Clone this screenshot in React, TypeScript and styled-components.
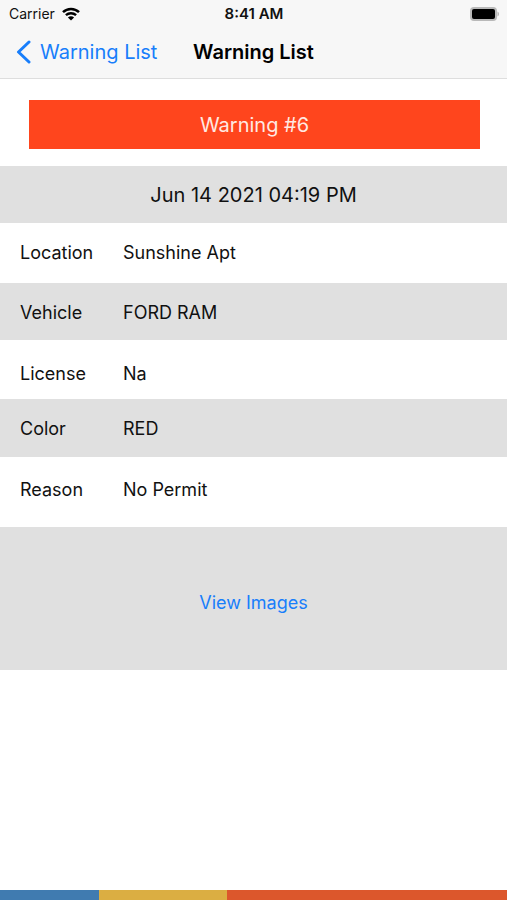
import React from 'react';
import styled, { createGlobalStyle } from 'styled-components';

const GlobalStyle = createGlobalStyle`
  *,
  *::before,
  *::after {
    box-sizing: border-box;
  }

  body {
    margin: 0;
    background: #ffffff;
    font-family: Inter, 'Liberation Sans', sans-serif;
    color: #111111;
  }
`;

const Screen = styled.div`
  min-height: 100vh;
  display: flex;
  flex-direction: column;
`;

const TopBar = styled.header`
  background: #f7f7f7;
  border-bottom: 1px solid #dedede;
`;

const StatusBar = styled.div`
  height: 28px;
  padding: 0 8px 0 9px;
  display: grid;
  grid-template-columns: 1fr auto 1fr;
  align-items: center;
  font-size: 14px;
  line-height: 20px;
`;

const Carrier = styled.div`
  display: flex;
  align-items: center;
  gap: 7px;
`;

const Clock = styled.time`
  font-size: 15px;
  font-weight: 600;
`;

const BatteryIcon = styled.svg`
  justify-self: end;
`;

const NavBar = styled.nav`
  height: 50px;
  padding: 0 16px 2px;
  display: grid;
  grid-template-columns: 1fr auto 1fr;
  align-items: center;
  font-size: 20px;
  line-height: 24px;
`;

const BackButton = styled.button`
  justify-self: start;
  display: flex;
  align-items: center;
  gap: 8px;
  padding: 0;
  border: none;
  background: none;
  color: #187efb;
  font: inherit;
  white-space: nowrap;
  cursor: pointer;
`;

const NavTitle = styled.h1`
  margin: 0;
  font-size: 20px;
  font-weight: 600;
  color: #000000;
  white-space: nowrap;
`;

const Banner = styled.h2`
  margin: 21px 27px 17px 29px;
  padding: 13px 12px 11px;
  background: #ff451d;
  color: #ffe9e2;
  font-size: 20px;
  font-weight: 400;
  line-height: 25px;
  text-align: center;
`;

const DateRow = styled.div`
  padding: 17px 16px 15px;
  background: #e0e0e0;
  font-size: 20px;
  line-height: 25px;
  text-align: center;
`;

const Details = styled.dl`
  margin: 0;
`;

const DetailRow = styled.div<{ $shaded: boolean; $top: number; $bottom: number }>`
  display: grid;
  grid-template-columns: 103px 1fr;
  padding: ${props => props.$top}px 20px ${props => props.$bottom}px;
  background: ${props => (props.$shaded ? '#e0e0e0' : '#ffffff')};
  font-size: 18px;
  line-height: 24px;
`;

const Label = styled.dt`
  margin: 0;
`;

const Value = styled.dd`
  margin: 0;
`;

const ImagesPanel = styled.div`
  display: flex;
  justify-content: center;
  padding: 64px 20px 55px;
  background: #e0e0e0;
`;

const ViewImagesButton = styled.button`
  padding: 0;
  border: none;
  background: none;
  color: #187efb;
  font: inherit;
  font-size: 18px;
  line-height: 24px;
  cursor: pointer;
`;

const Footer = styled.footer`
  height: 10px;
  margin-top: auto;
  display: flex;
`;

const Stripe = styled.span<{ $color: string; $share: number }>`
  flex: ${props => props.$share} 0 0;
  background: ${props => props.$color};
`;

type Detail = {
  label: string;
  value: string;
  top: number;
  bottom: number;
};

const details: Detail[] = [
  { label: 'Location', value: 'Sunshine Apt', top: 18, bottom: 18 },
  { label: 'Vehicle', value: 'FORD RAM', top: 18, bottom: 15 },
  { label: 'License', value: 'Na', top: 22, bottom: 13 },
  { label: 'Color', value: 'RED', top: 18, bottom: 16 },
  { label: 'Reason', value: 'No Permit', top: 21, bottom: 25 },
];

const App: React.FC = () => {
  return (
    <Screen>
      <GlobalStyle />

      <TopBar>
        <StatusBar>
          <Carrier>
            Carrier
            <svg width="18" height="14" viewBox="0 0 18 14" fill="none" aria-hidden="true">
              <path d="M1 5.2C5.4 0.9 12.6 0.9 17 5.2" stroke="#000" strokeWidth="2.5" />
              <path d="M3.9 8.2C6.8 5.5 11.2 5.5 14.1 8.2" stroke="#000" strokeWidth="2.4" />
              <path d="M9 13.6L5.9 10.5C7.7 8.9 10.3 8.9 12.1 10.5Z" fill="#000" />
            </svg>
          </Carrier>
          <Clock>8:41 AM</Clock>
          <BatteryIcon width="30" height="16" viewBox="0 0 30 16" aria-hidden="true">
            <rect x="1" y="1" width="27" height="14" rx="4" fill="#b9b9b9" />
            <rect x="3" y="3" width="23" height="10" rx="2" fill="#000" />
            <path d="M28.5 5.5C30.4 6.4 30.4 9.6 28.5 10.5Z" fill="#b0b0b0" />
          </BatteryIcon>
        </StatusBar>

        <NavBar>
          <BackButton type="button">
            <svg width="16" height="24" viewBox="0 0 16 24" fill="none" aria-hidden="true">
              <path
                d="M13 2L2.5 12L13 22"
                stroke="currentColor"
                strokeWidth="3"
                strokeLinecap="round"
                strokeLinejoin="round"
              />
            </svg>
            Warning List
          </BackButton>
          <NavTitle>Warning List</NavTitle>
        </NavBar>
      </TopBar>

      <main>
        <Banner>Warning #6</Banner>
        <DateRow>Jun 14 2021 04:19 PM</DateRow>

        <Details>
          {details.map((detail, index) => (
            <DetailRow
              key={detail.label}
              $shaded={index % 2 === 1}
              $top={detail.top}
              $bottom={detail.bottom}
            >
              <Label>{detail.label}</Label>
              <Value>{detail.value}</Value>
            </DetailRow>
          ))}
        </Details>

        <ImagesPanel>
          <ViewImagesButton type="button">View Images</ViewImagesButton>
        </ImagesPanel>
      </main>

      <Footer>
        <Stripe $color="#407bb0" $share={99} />
        <Stripe $color="#dbae42" $share={128} />
        <Stripe $color="#dc572c" $share={280} />
      </Footer>
    </Screen>
  );
};

export default App;
